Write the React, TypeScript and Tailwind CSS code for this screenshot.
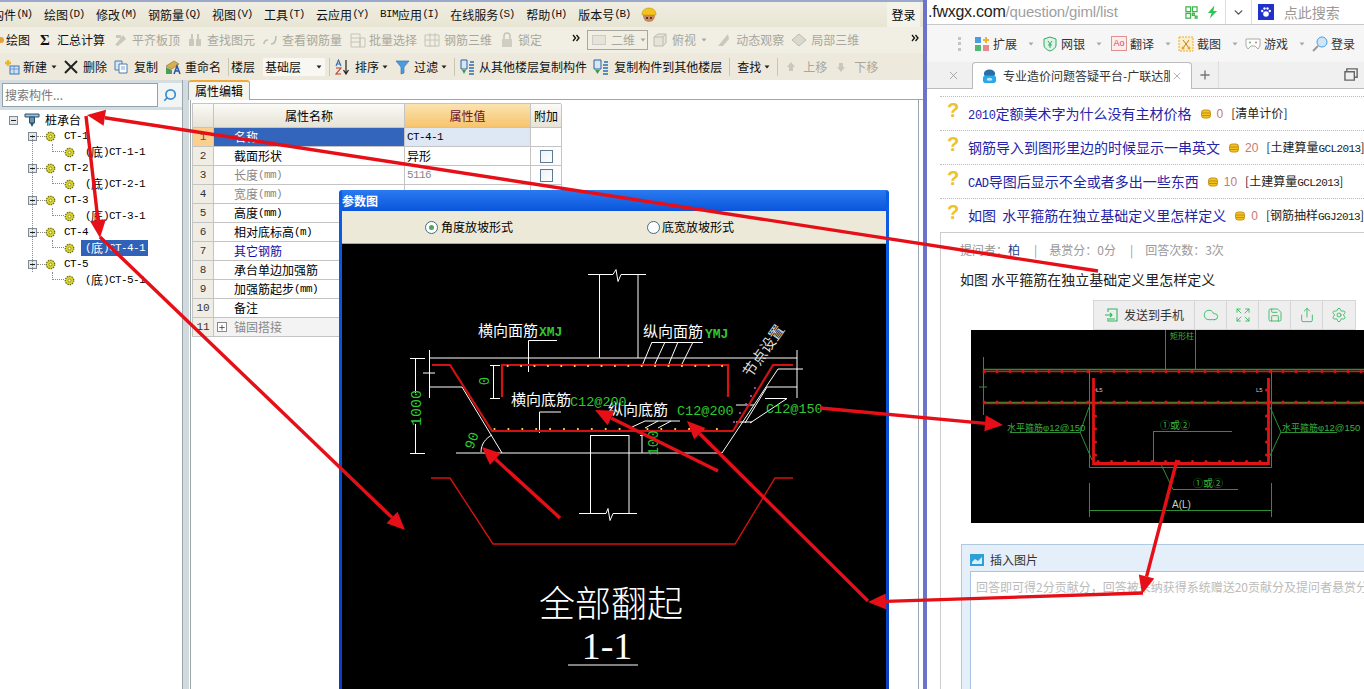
import React from "react";
import { Cloud, Expand, Save, Share, Settings, ChevronDown, Plus, X, Search } from "lucide-react";

const Drop = ({ className = "", gray = false }: { className?: string; gray?: boolean }) => (
  <svg viewBox="0 0 8 8" className={`w-[8px] h-[8px] shrink-0 ${className}`}>
    <path d="M1.5 2.5h5L4 5.5z" fill={gray ? "#a9a79c" : "#222"} />
  </svg>
);
const Sep = ({ className = "" }: { className?: string }) => <span className={`w-px h-[18px] bg-[#c9c6b6] shrink-0 ${className}`} />;
const Chev2 = ({ className = "" }: { className?: string }) => (
  <svg viewBox="0 0 8 8" className={`w-[8px] h-[8px] shrink-0 -mt-[5px] ${className}`} fill="none" stroke="#111" strokeWidth="1.3">
    <path d="M1 1l2.5 3L1 7M4.5 1L7 4 4.5 7" />
  </svg>
);

const Menu = ({ n, k, latin }: { n: string; k: string; latin?: string }) => (
  <span className="flex items-center shrink-0 text-[12px] text-[#111]">
    {latin && <span className="font-['Liberation_Mono',monospace] text-[11px] tracking-[-0.6px] w-[18px]">{latin}</span>}
    {n}
    <span className="w-[16px] font-['Liberation_Mono',monospace] text-[11px] tracking-[-1.4px] text-center whitespace-nowrap">({k})</span>
  </span>
);

const G = ({ w, children, className = "" }: { w: number; children: React.ReactNode; className?: string }) => (
  <svg viewBox={`0 0 ${w} 16`} width={w} height={16} className={`shrink-0 ${className}`}>{children}</svg>
);

const M = ({ children }: { children: React.ReactNode }) => (
  <span className="font-['Liberation_Mono',monospace] text-[11px] tracking-[-0.6px]">{children}</span>
);

const Gear = ({ className = "" }: { className?: string }) => (
  <svg viewBox="0 0 12 12" className={`w-[11px] h-[11px] shrink-0 ${className}`}>
    <circle cx="6" cy="6" r="4.6" fill="#d8d830" stroke="#6e6a10" strokeWidth="1.4" strokeDasharray="1.6 1" />
    <circle cx="6" cy="6" r="1.6" fill="#fffbb0" stroke="#6e6a10" strokeWidth=".7" />
  </svg>
);
const MinusBox = ({ className = "" }: { className?: string }) => (
  <span className={`w-[9px] h-[9px] border border-[#7f8a94] bg-[#e8e8e8] flex items-center justify-center shrink-0 ${className}`}>
    <span className="w-[5px] h-px bg-[#222]" />
  </span>
);

const treeData = [1, 2, 3, 4, 5];

const Tree = () => (
  <div className="relative pt-[2px]">
    <div className="h-[16px] flex items-center pl-[9px]">
      <MinusBox />
      <svg viewBox="0 0 16 16" className="w-[16px] h-[16px] ml-[6px] shrink-0">
        <path d="M1 2h14v3H1z" fill="#9ec0d8" stroke="#28516e" />
        <path d="M5.5 5h5v6h-5z" fill="#6b93ae" stroke="#28516e" />
        <path d="M6 11h4l-2 4z" fill="#28516e" />
      </svg>
      <span className="ml-[5px] text-[12px] text-black">桩承台</span>
    </div>
    {treeData.map((i) => (
      <div key={i}>
        <div className="h-[16px] flex items-center pl-[28px]">
          <MinusBox />
          <span className="w-[8px] border-t border-dotted border-[#888]" />
          <Gear />
          <span className="ml-[8px] flex items-center"><M>{`CT-${i}`}</M></span>
        </div>
        <div className="h-[16px] flex items-center pl-[52px]">
          <span className="w-[12px] h-[8px] -mt-[8px] border-l border-b border-dotted border-[#888]" />
          <Gear />
          {i === 4 ? (
            <span className="ml-[6px] h-[16px] w-[67px] pl-[4px] flex items-center bg-[#2f62b8] text-white text-[12px] whitespace-pre"><M>(</M>底<M>)CT-4-1</M></span>
          ) : (
            <span className="ml-[10px] flex items-center text-[12px] text-black whitespace-pre"><M>(</M>底<M>){`CT-${i}-1`}</M></span>
          )}
        </div>
      </div>
    ))}
    <div className="absolute left-[32px] top-[25px] h-[137px] border-l border-dotted border-[#888]" />
  </div>
);

const rows: [string, string, string, string, string][] = [
  ["名称", "", "CT-4-1", "", "sel"],
  ["截面形状", "", "异形", "box", ""],
  ["长度", "(mm)", "5116", "box", "gray"],
  ["宽度", "(mm)", "", "", "gray"],
  ["高度", "(mm)", "", "", ""],
  ["相对底标高", "(m)", "", "", ""],
  ["其它钢筋", "", "", "", "blue"],
  ["承台单边加强筋", "", "", "", ""],
  ["加强筋起步", "(mm)", "", "", ""],
  ["备注", "", "", "", ""],
  ["锚固搭接", "", "", "", "plus"],
];

const PropTable = () => (
  <div className="grid grid-cols-[21px_191px_126px_31px] grid-rows-[24px] auto-rows-[19px] w-[369px] border-l border-t border-[#c4c4c4] text-[12px]">
    <div className="bg-gradient-to-b from-[#fbfaf6] to-[#e6e3d6] border-b border-r border-[#c4c4c4]" />
    <div className="bg-gradient-to-b from-[#fbfaf6] to-[#e6e3d6] border-b border-r border-[#c4c4c4] flex items-center justify-center text-black">属性名称</div>
    <div className="bg-gradient-to-b from-[#fbe3b0] to-[#f7c46c] border-b border-r border-[#c4c4c4] flex items-center justify-center text-[#6b1030]">属性值</div>
    <div className="bg-gradient-to-b from-[#fbfaf6] to-[#e6e3d6] border-b border-r border-[#c4c4c4] flex items-center justify-center text-black">附加</div>
    {rows.map((r, i) => (
      <React.Fragment key={i}>
        <div className={`border-b border-r border-[#c4c4c4] flex items-center justify-center font-['Liberation_Mono',monospace] text-[11px] ${r[4] === "sel" ? "bg-[#fbd08e] text-[#555]" : "bg-[#f0eee4] text-[#333]"}`}>{i + 1}</div>
        <div className={`border-b border-r border-[#c4c4c4] flex items-center whitespace-pre ${r[4] === "sel" ? "bg-[#3265bb] text-white pl-[20px]" : r[4] === "plus" ? "bg-[#f3f3f3] text-[#888] pl-[3px]" : r[4] === "gray" ? "text-[#888] pl-[20px]" : r[4] === "blue" ? "text-[#1111aa] pl-[20px]" : "text-black pl-[20px]"}`}>
          {r[4] === "plus" && (
            <span className="w-[10px] h-[10px] border border-[#888] bg-white flex items-center justify-center mr-[7px]"><Plus size={9} color="#222" strokeWidth={2} /></span>
          )}
          {r[0]}
          {r[1] && <M>{r[1]}</M>}
        </div>
        <div className={`border-b border-r border-[#c4c4c4] flex items-center pl-[2px] ${r[4] === "sel" ? "bg-[#dee8f4]" : r[4] === "plus" ? "bg-[#f3f3f3]" : ""} ${r[4] === "gray" ? "text-[#888]" : "text-black"}`}>
          {r[4] === "gray" || r[4] === "sel" ? <M>{r[2]}</M> : r[2]}
        </div>
        <div className={`border-b border-r border-[#c4c4c4] flex items-center justify-center ${r[4] === "plus" ? "bg-[#f3f3f3]" : ""}`}>
          {r[3] === "box" && <span className="w-[13px] h-[13px] border border-[#5b7a93] bg-gradient-to-br from-[#eef0f2] to-white" />}
        </div>
      </React.Fragment>
    ))}
  </div>
);

const Cad = () => {
  const top = Array.from({ length: 17 }, (_, i) => 507.7 + i * 13.4);
  const bottom = Array.from({ length: 18 }, (_, i) => 494.5 + i * 13.9);
  return (
    <svg viewBox="342 244 544 445" className="w-[544px] h-[445px] block" fontFamily="'Noto Sans CJK SC', sans-serif">
      <g stroke="#fff" strokeWidth="1" fill="none">
        <path d="M588 274.5H613l3 -5 2 12 3-7H646M599.5 274V358M638 274V358" />
        <path d="M429 358H797M429.5 350V398M423 373H435M429 387H462L502 453M456 453H722L778 369H803M767 387H797M797 350V398" />
        <path d="M410 358.5H425M410 453.5H425M415.5 358V393M415.5 424V453" />
        <path d="M490 365.5H500M490 398.5H500M493.5 365V398" />
        <path d="M528.5 372V340.5H557M652 342.5H703M642 366L652 342M654 366L665 342M668 366L678 342M681 366L693 342" />
        <path d="M539.5 433V412H561M632 427L645 421H680M645 428L658 421M658 428L671 421" />
        <path d="M765 398.5H787L750 423M736 405H754M736 422H752M767 387L745 423" />
        <path d="M590.5 435V513M629 435V513M590 435.5H629M579 513.5H606l2 -5 2 12 3-7H637M642 435V453M640 435.5H647" />
        <path d="M481 452C481 444 486 438 492 435" />
        <path d="M568 665H638" />
      </g>
      <g fill="none" stroke="#d11212">
        <path d="M432 365H450L492 431H733L773 365H793" strokeWidth="2.2" />
        <path d="M502 397V365H728V397" strokeWidth="2.2" />
        <path d="M431 478H450L493 544H735L775 478H793" strokeWidth="1.4" />
      </g>
      {top.slice(0, 17).map((x) => <circle key={x} cx={x} cy={366} r="1.1" fill="#ffe14d" />)}
      {bottom.slice(0, 17).map((x) => <circle key={x} cx={x} cy={429} r="1.1" fill="#ffe14d" />)}
      {[[755, 388], [751, 396], [746, 404], [740, 413], [734, 422]].map(([x, y]) => <circle key={x} cx={x} cy={y} r="1.1" fill="#c050e0" />)}
      <g fill="#fff" fontSize="15">
        <text x="478" y="336">横向面筋</text>
        <text x="643" y="337">纵向面筋</text>
        <text x="511" y="405">横向底筋</text>
        <text x="608" y="415">纵向底筋</text>
        <text x="768" y="354" transform="rotate(-55 768 354)" fontSize="15" textAnchor="middle" fill="#ddd">节点设置</text>
        <text x="611" y="617" textAnchor="middle" fontSize="36" fontWeight="300">全部翻起</text>
        <text x="607" y="659" textAnchor="middle" fontSize="38" fontFamily="'Liberation Serif', serif">1-1</text>
      </g>
      <g fill="#2fc832" fontFamily="'Liberation Mono', monospace" fontSize="13">
        <text x="539" y="336" fontWeight="700">XMJ</text>
        <text x="705" y="338" fontWeight="700">YMJ</text>
        <text x="570" y="406" fontSize="13.5">C12@200</text>
        <text x="677" y="415" fontSize="13.5">C12@200</text>
        <text x="766" y="413" fontSize="13.5">C12@150</text>
        <text x="421" y="408" fontSize="15" textAnchor="middle" transform="rotate(-90 421 408)">1000</text>
        <text x="489" y="381" fontSize="14" textAnchor="middle" transform="rotate(-90 489 381)">0</text>
        <text x="658" y="443" fontSize="14" textAnchor="middle" transform="rotate(-90 658 443)">100</text>
        <text x="476" y="442" fontSize="14" textAnchor="middle" transform="rotate(-70 476 442)">90</text>
      </g>
    </svg>
  );
};

const Photo = () => {
  const ds = Array.from({ length: 30 }, (_, i) => 984 + i * 13);
  const us = Array.from({ length: 13 }, (_, i) => 1098 + i * 13.5);
  const vs = [390, 403, 416, 429, 442, 455];
  return (
    <svg viewBox="971 330 393 193" className="w-[393px] h-[193px] block bg-black" fontFamily="'Noto Sans CJK SC', sans-serif">
      <g stroke="#2f8f35" strokeWidth="1" fill="none">
        <path d="M1165.5 330V369M1195.5 330V369M983.5 357V415M979 387H987" />
        <path d="M983 369.5H1364M983 402.5H1364" strokeWidth="1.5" />
        <path d="M1089.5 370V467.5H1271.5V370" />
        <path d="M1010 432.5H1080L1089 407M1080 432L1092 460" />
        <path d="M1281 432.5H1337M1281 432L1270 407M1281 432L1268 460" />
        <path d="M1153 431.5H1232M1153.5 431V463M1160 462L1173 489.5H1238" />
        <path d="M1089 510.5H1271M1089.5 483V517M1271.5 483V517" />
      </g>
      <g stroke="#e01414" fill="none">
        <path d="M983 371.5H1364M983 403.5H1364" strokeWidth="1.6" />
        <path d="M1093.5 378V463.5H1268.5V378" strokeWidth="2.8" />
      </g>
      {ds.map((x) => <circle key={x} cx={x} cy={371.5} r="1.5" fill="#e01414" />)}
      {ds.map((x) => <circle key={x} cx={x} cy={402} r="1.5" fill="#e01414" />)}
      {us.map((x) => <circle key={x} cx={x} cy={461.5} r="1.5" fill="#e01414" />)}
      {vs.map((y) => <circle key={y} cx={1095.5} cy={y} r="1.5" fill="#e01414" />)}
      {vs.map((y) => <circle key={y} cx={1266.5} cy={y} r="1.5" fill="#e01414" />)}
      <g fill="#3ab03f" fontSize="10">
        <text x="1170" y="339" fontSize="8">矩形柱</text>
        <text x="1007" y="431" fontSize="9">水平箍筋<tspan fontSize="9.5" fontFamily="'Liberation Sans', sans-serif">φ12@150</tspan></text>
        <text x="1282" y="431" fontSize="9">水平箍筋<tspan fontSize="9.5" fontFamily="'Liberation Sans', sans-serif">φ12@150</tspan></text>
        <text x="1160" y="429" fontSize="10">①或②</text>
        <text x="1193" y="487" fontSize="10">①或②</text>
        <text x="1172" y="508" fontSize="10" fill="#bcd8bc" fontFamily="'Liberation Sans', sans-serif">A(L)</text>
        <text x="1096" y="392" fontSize="6" fill="#ccc" fontFamily="'Liberation Sans', sans-serif">L5</text>
        <text x="1256" y="392" fontSize="6" fill="#ccc" fontFamily="'Liberation Sans', sans-serif">L5</text>
      </g>
    </svg>
  );
};

type Arrow = [number, number, number, number];
const arrows: Arrow[] = [
  [1098, 271, 87, 115],
  [86, 116, 100, 238],
  [100, 237, 405, 530],
  [560, 518, 482, 447],
  [718, 471, 595, 410],
  [868, 601, 687, 421],
  [820, 408, 1003, 425],
  [1177, 460, 1142, 594],
  [1143, 593, 868, 602],
];

const Arrows = () => (
  <svg viewBox="0 0 1364 689" className="absolute inset-0 w-[1364px] h-[689px] pointer-events-none">
    {arrows.map(([a, b, c, d], i) => {
      const len = Math.hypot(c - a, d - b);
      const ux = (c - a) / len, uy = (d - b) / len;
      const bx = c - ux * 18, by = d - uy * 18;
      const pts = `${c},${d} ${bx - uy * 8},${by + ux * 8} ${bx + uy * 8},${by - ux * 8}`;
      return (
        <g key={i}>
          <line x1={a} y1={b} x2={bx} y2={by} stroke="#e60f17" strokeWidth="3.4" />
          <polygon points={pts} fill="#e60f17" />
        </g>
      );
    })}
  </svg>
);

const qs = [
  { p: "2010", t: "定额美术字为什么没有主材价格", c: "0", cat: "清单计价", latin: "" },
  { p: "", t: "钢筋导入到图形里边的时候显示一串英文", c: "20", cat: "土建算量", latin: "GCL2013" },
  { p: "CAD", t: "导图后显示不全或者多出一些东西", c: "10", cat: "土建算量", latin: "GCL2013" },
  { p: "", t: "如图  水平箍筋在独立基础定义里怎样定义", c: "0", cat: "钢筋抽样", latin: "GGJ2013" },
];

const Coin = () => (
  <svg viewBox="0 0 10 10" className="w-[10px] h-[10px] shrink-0">
    <rect x=".5" y="1" width="9" height="8" rx="2.5" fill="#f2c21f" stroke="#c8941a" />
    <path d="M1 4h8M1 6.5h8" stroke="#a87a12" strokeWidth=".7" />
  </svg>
);

const RT = ({ label, children, className = "" }: { label: string; children: React.ReactNode; className?: string }) => (
  <span className={`flex items-center shrink-0 ${className}`}>
    <span className="w-[16px] h-[16px] flex items-center justify-center">{children}</span>
    <span className="ml-[3px] text-[12px] text-[#333] w-[24px] whitespace-nowrap">{label}</span>
    <Drop gray className="ml-[10px]" />
  </span>
);

export default function App() {
  return (
    <div className="relative w-[1364px] h-[689px] overflow-hidden flex bg-white font-['Noto_Sans_CJK_SC',sans-serif] text-[12px]">
      {/* Left application window */}
      <div className="w-[923px] h-full flex flex-col bg-[#ece9d8] shrink-0">
        <div className="h-[2px] bg-[#9aa8cc]" />
        <div className="h-[25px] flex items-center gap-[12px] -ml-[8px] bg-gradient-to-b from-[#f0eee2] to-[#e8e5d4] overflow-hidden">
          <Menu n="构件" k="N" />
          <Menu n="绘图" k="D" />
          <Menu n="修改" k="M" />
          <Menu n="钢筋量" k="Q" />
          <Menu n="视图" k="V" />
          <Menu n="工具" k="T" />
          <Menu n="云应用" k="Y" />
          <Menu n="应用" k="I" latin="BIM" />
          <Menu n="在线服务" k="S" />
          <Menu n="帮助" k="H" />
          <Menu n="版本号" k="B" />
          <svg viewBox="0 0 16 16" className="w-[16px] h-[16px] -ml-[1px] shrink-0">
            <circle cx="8" cy="9" r="6" fill="#c98a5a" />
            <path d="M1 8C1 3 4 1 8 1s7 2 7 7z" fill="#f4c21c" stroke="#b88a10" strokeWidth=".5" />
            <circle cx="6" cy="11" r="1" fill="#222" /><circle cx="10" cy="11" r="1" fill="#222" />
          </svg>
          <span className="ml-auto mr-[3px] w-[33px] h-[25px] bg-[#f4f3ea] flex items-center justify-center text-[12px] text-black">登录</span>
        </div>
        <div className="h-[26px] flex items-center bg-[#f1efe3] text-[#111] overflow-hidden">
          <span className="w-[4px] h-[6px] bg-[#e5a23a] rounded-r-full shrink-0" />
          <span className="ml-[2px] w-[24px] shrink-0">绘图</span>
          <span className="ml-[10px] w-[10px] font-['Liberation_Serif',serif] font-bold text-[15px] leading-none shrink-0">Σ</span>
          <span className="ml-[7px] shrink-0">汇总计算</span>
          <G w={14} className="ml-[8px]"><path d="M2 13L10 3l3 4-8 7zM3 3h5v3H3z" fill="#c9c8bc" /></G>
          <span className="ml-[5px] text-[#a9a79c] shrink-0">平齐板顶</span>
          <G w={16} className="ml-[7px]"><path d="M2 7h5v7H2zM9 7h5v7H9zM4 2h2v5H4zM10 2h2v5h-2z" fill="#c9c8bc" /></G>
          <span className="ml-[4px] text-[#a9a79c] shrink-0">查找图元</span>
          <G w={14} className="ml-[8px]"><path d="M1 12c0-3 2-4 4-4M8 12c3 0 5-3 5-8" fill="none" stroke="#bfbeb2" strokeWidth="1.6" /></G>
          <span className="ml-[5px] text-[#a9a79c] shrink-0">查看钢筋量</span>
          <G w={16} className="ml-[8px]"><path d="M1 2h9v13H1zM10 6h5v9h-5zM1 6h9M1 10h9" fill="none" stroke="#c4c3b6" /></G>
          <span className="ml-[3px] text-[#a9a79c] shrink-0">批量选择</span>
          <G w={16} className="ml-[7px]"><path d="M1 3h14v11H1zM6 1v14M11 1v14M1 8h14" fill="none" stroke="#c4c3b6" /></G>
          <span className="ml-[4px] text-[#a9a79c] shrink-0">钢筋三维</span>
          <G w={14} className="ml-[8px]"><path d="M2 7h10v8H2z" fill="#cfcec2" /><path d="M4 7V4a3 3 0 016 0v3" fill="none" stroke="#c4c3b6" strokeWidth="1.5" /></G>
          <span className="ml-[4px] text-[#a9a79c] shrink-0">锁定</span>
          <Chev2 className="ml-[30px]" />
          <span className="ml-[7px] w-[61px] h-[20px] border border-[#a9a79c] flex items-center pl-[4px] text-[#a9a79c] shrink-0">
            <span className="w-[14px] h-[10px] bg-[#e6e4d8] border border-[#ccc] mr-[5px]" />二维<Drop gray className="ml-[4px]" />
          </span>
          <G w={14} className="ml-[5px]"><path d="M1 5l4-3h8v9l-3 3H1zM1 5h9v9M10 5l3-3" fill="#e6e4d8" stroke="#bdbcb0" /></G>
          <span className="ml-[5px] text-[#a9a79c] shrink-0">俯视</span>
          <Drop gray className="ml-[4px]" />
          <G w={16} className="ml-[7px]"><path d="M3 14L13 2l1 5-6 7z" fill="#c9c8bc" /></G>
          <span className="ml-[5px] text-[#a9a79c] shrink-0">动态观察</span>
          <G w={16} className="ml-[7px]"><path d="M1 8l7-6 7 6-7 6z" fill="#dad9cd" stroke="#bdbcb0" /></G>
          <span className="ml-[4px] text-[#a9a79c] shrink-0">局部三维</span>
          <Chev2 className="ml-[52px]" />
        </div>
        <div className="h-[27px] flex items-center bg-[#ede9dc] text-[#111] overflow-hidden pl-[4px]">
          <G w={16}><rect x="6" y="7" width="9" height="8" fill="#cfe0f0" stroke="#3a79b8" /><path d="M6 10h9M10 7v8" stroke="#3a79b8" strokeWidth=".6" /><path d="M1 4h6M4 1v6" stroke="#e8b82c" strokeWidth="2.4" /></G>
          <span className="ml-[3px] shrink-0">新建</span>
          <Drop className="ml-[3px]" />
          <svg viewBox="0 0 14 14" className="w-[14px] h-[14px] ml-[6px] shrink-0"><path d="M1 1l12 12M13 1L1 13" stroke="#222" strokeWidth="2" /></svg>
          <span className="ml-[5px] shrink-0">删除</span>
          <G w={14} className="ml-[7px]"><path d="M1 2h7v9H1z" fill="#d8e6f4" stroke="#4a7bb0" /><path d="M5 5h8v9H5z" fill="#fff" stroke="#4a7bb0" /><path d="M7 8h4M7 10h4" stroke="#4a7bb0" strokeWidth=".7" /></G>
          <span className="ml-[6px] shrink-0">复制</span>
          <G w={16} className="ml-[7px]"><path d="M1 7L9 2l5 3-7 5z" fill="#d9b04a" stroke="#8c6d1e" strokeWidth=".6" /><path d="M1 15V8l6 3v4z" fill="#4d9a5a" /><path d="M9 15l3-8 3 8M10 12h4" fill="none" stroke="#2a56a8" strokeWidth="1.5" /></G>
          <span className="ml-[4px] shrink-0">重命名</span>
          <Sep className="ml-[7px]" />
          <span className="ml-[2px] shrink-0">楼层</span>
          <span className="ml-[8px] w-[62px] h-[18px] bg-[#f8f7f1] flex items-center pl-[2px] shrink-0">基础层<Drop className="ml-auto mr-[2px]" /></span>
          <Sep className="ml-[4px]" />
          <G w={16} className="ml-[5px]"><path d="M1 7l2.5-6L6 7M1.8 5h3.4" fill="none" stroke="#2a6cc0" strokeWidth="1.1" /><path d="M1 9h5L1 15h5" fill="none" stroke="#c0392b" strokeWidth="1.1" /><path d="M11 1v13M8.5 11l2.5 4 2.5-4" fill="none" stroke="#222" strokeWidth="1.2" /></G>
          <span className="ml-[4px] shrink-0">排序</span>
          <Drop className="ml-[2px]" />
          <G w={15} className="ml-[6px]"><path d="M1 2h13L9 8v6l-3 1V8z" fill="#4c9de0" stroke="#2a6cb0" strokeWidth=".6" /></G>
          <span className="ml-[4px] shrink-0">过滤</span>
          <Drop className="ml-[2px]" />
          <Sep className="ml-[6px]" />
          <G w={15} className="ml-[5px]"><path d="M1 1h6v9H1z" fill="#d8e6f4" stroke="#2d5f9e" /><path d="M2 11h4l-2 4z" fill="#3a9a4a" /><path d="M9 6h5M9 9h5M9 12h5M9 15h5M10 3h4" stroke="#2d6fb8" strokeWidth="1.6" /></G>
          <span className="ml-[4px] shrink-0">从其他楼层复制构件</span>
          <G w={16} className="ml-[6px]"><path d="M1 1h7v9H1z" fill="#d8e6f4" stroke="#2d5f9e" /><path d="M2 11h5l-2.5 4z" fill="#3a9a4a" /><path d="M10 6h5M10 9h5M10 12h5M10 15h5M11 3h4" stroke="#2d6fb8" strokeWidth="1.6" /></G>
          <span className="ml-[5px] shrink-0">复制构件到其他楼层</span>
          <Sep className="ml-[7px]" />
          <span className="ml-[7px] shrink-0">查找</span>
          <Drop className="ml-[2px]" />
          <Sep className="ml-[6px]" />
          <G w={10} className="ml-[8px]"><path d="M5 3l4 5H7v4H3V8H1z" fill="#c9c8bc" /></G>
          <span className="ml-[7px] text-[#a9a79c] shrink-0">上移</span>
          <G w={10} className="ml-[9px]"><path d="M5 13l4-5H7V4H3v4H1z" fill="#c9c8bc" /></G>
          <span className="ml-[8px] text-[#a9a79c] shrink-0">下移</span>
        </div>
        <div className="flex-1 flex min-h-0">
          <div className="w-[183px] bg-white flex flex-col border-r border-[#9aa7ad] shrink-0">
            <div className="h-[30px] bg-[#d6dde0] flex items-center pl-[2px]">
              <div className="w-[156px] h-[24px] border border-[#8fa3ad] bg-white flex items-center pl-[2px] text-[#777] text-[12px]">搜索构件...</div>
              <div className="flex-1 h-[24px] bg-[#f2f5f6] flex items-center justify-center">
                <Search size={14} strokeWidth={3} color="#3f8fcf" className="-scale-x-100" />
              </div>
            </div>
            <Tree />
          </div>
          <div className="w-[6px] bg-[#d3dade] shrink-0" />
          <div className="flex-1 flex flex-col bg-white min-w-0">
            <div className="h-[20px] flex items-end">
              <div className="ml-[-1px] w-[62px] h-[20px] border border-b-0 border-[#9aa7ad] border-t-2 border-t-[#f0a93a] rounded-t-[3px] bg-[#f4f4ee] flex items-center justify-center text-[12px] text-black">属性编辑</div>
              <div className="flex-1 border-b border-[#9aa7ad]" />
            </div>
            <div className="flex-1 mr-[4px] ml-[1px] pl-[1px] pt-[3px] border-r border-l border-[#9aa7ad] bg-white">
              <PropTable />
            </div>
          </div>
        </div>
      </div>
      <div className="w-[4px] h-full bg-[#6b74c9] shrink-0" />

      {/* Right browser */}
      <div className="flex-1 min-w-0 h-full flex flex-col bg-white overflow-hidden">
        <div className="h-[25px] flex items-center border-b border-[#c8c8c8] shrink-0 font-['Liberation_Sans',sans-serif] text-[16px]">
          <span className="text-[#222] ml-[1px] tracking-[-0.25px]">.fwxgx.com</span><span className="text-[#a0a0a0] text-[15px] tracking-[-0.15px]">/question/giml/list</span>
          <svg viewBox="0 0 14 14" className="w-[13px] h-[13px] ml-[67px] shrink-0">
            <path d="M1 1h5v5H1zM8 1h5v5H8zM1 8h5v5H1zM8 8h2v2H8zM11 11h2v2h-2z" fill="none" stroke="#3bb54a" strokeWidth="1.3" />
          </svg>
          <svg viewBox="0 0 12 14" className="w-[11px] h-[14px] ml-[9px] shrink-0"><path d="M8 0L1 8h4l-2 6 8-8H7z" fill="#30c452" /></svg>
          <span className="w-px h-[24px] bg-[#ddd] ml-[7px]" />
          <ChevronDown size={13} strokeWidth={2.6} color="#555" className="ml-[6px]" />
          <span className="w-px h-[24px] bg-[#ddd] ml-[6px]" />
          <span className="ml-[6px] w-[16px] h-[16px] bg-[#2030c8] border border-[#2030c8] flex items-center justify-center shrink-0">
            <svg viewBox="0 0 12 12" className="w-[12px] h-[12px]"><circle cx="6" cy="8" r="2.8" fill="#fff" /><circle cx="2.2" cy="5" r="1.2" fill="#fff" /><circle cx="9.8" cy="5" r="1.2" fill="#fff" /><circle cx="4.5" cy="2.5" r="1.2" fill="#fff" /><circle cx="7.5" cy="2.5" r="1.2" fill="#fff" /></svg>
          </span>
          <span className="ml-[10px] text-[14px] text-[#999] font-['Noto_Sans_CJK_SC',sans-serif] whitespace-nowrap">点此搜索</span>
        </div>
        <div className="h-[37px] flex items-center bg-[#f6f6f6] shrink-0 pl-[31px]">
          <span className="w-[3px] h-[14px] border-l-[3px] border-dotted border-[#c4c4c4]" />
          <RT label="扩展" className="ml-[13px]">
            <svg viewBox="0 0 16 16" className="w-[16px] h-[16px]"><path d="M1 1h6v6H1z" fill="#4a9de0" /><path d="M9 9h6v6H9z" fill="#e88a8a" /><path d="M1 9h6v6H1z" fill="#50b870" /><path d="M12 1v6M9 4h6" stroke="#f0b030" strokeWidth="2" /></svg>
          </RT>
          <RT label="网银" className="ml-[7px]">
            <svg viewBox="0 0 14 16" className="w-[14px] h-[16px]"><path d="M7 1l6 2v6c0 3-3 5-6 6-3-1-6-3-6-6V3z" fill="#dff4e6" stroke="#33aa66" /><path d="M5 5l2 3 2-3M7 8v4M5 9h4" stroke="#33aa66" fill="none" /></svg>
          </RT>
          <RT label="翻译" className="ml-[8px]">
            <span className="w-[16px] h-[15px] border border-[#e09090] bg-[#fdecec] text-[#d05050] text-[9px] flex items-center justify-center font-['Liberation_Sans',sans-serif]">Ao</span>
          </RT>
          <RT label="截图" className="ml-[6px]">
            <svg viewBox="0 0 16 16" className="w-[16px] h-[16px]"><path d="M1 1h14v14H1z" fill="#fbeec8" stroke="#e8b030" strokeDasharray="2 1" /><path d="M5 4l6 8M11 4l-6 8" stroke="#c08020" /><circle cx="5" cy="12" r="1.5" fill="#e8a030" /><circle cx="11" cy="12" r="1.5" fill="#e8a030" /></svg>
          </RT>
          <RT label="游戏" className="ml-[6px]">
            <svg viewBox="0 0 16 16" className="w-[16px] h-[16px]"><path d="M1 3h14v7l-2 3-3-3H6l-3 3-2-3z" fill="#fff" stroke="#aaa" /><circle cx="5" cy="6.5" r="1" fill="#5bb35b" /><circle cx="11" cy="6.5" r="1" fill="#e07070" /></svg>
          </RT>
          <span className="ml-[6px] flex items-center shrink-0">
            <svg viewBox="0 0 16 16" className="w-[16px] h-[16px]"><circle cx="10" cy="6" r="5" fill="#cfe6f8" stroke="#4a9de0" /><path d="M6 10l-5 5" stroke="#999" strokeWidth="2" /></svg>
            <span className="ml-[3px] text-[#333] whitespace-nowrap">登录</span>
          </span>
        </div>
        <div className="h-[27px] flex items-end bg-[#f0f0f0] border-b border-[#bbb] shrink-0 relative">
          <X size={13} color="#999" strokeWidth={1.5} className="ml-[20px] mb-[6px]" />
          <div className="ml-[12px] w-[220px] h-[27px] -mb-px bg-white border border-b-0 border-[#bbb] rounded-t-[4px] flex items-center pl-[9px]">
            <svg viewBox="0 0 16 16" className="w-[15px] h-[15px] shrink-0"><ellipse cx="8" cy="5" rx="6" ry="4.5" fill="#2a6ca8" /><rect x="1" y="7" width="14" height="8" rx="3" fill="#2aa8e8" /><ellipse cx="8" cy="11" rx="3" ry="1.6" fill="#fff" opacity=".7" /></svg>
            <span className="ml-[6px] w-[167px] overflow-hidden whitespace-nowrap text-[12px] text-[#333]">专业造价问题答疑平台-广联达服务新干线</span>
            <X size={12} color="#999" strokeWidth={1.5} className="ml-[1px] shrink-0" />
          </div>
          <Plus size={14} strokeWidth={2.4} color="#777" className="ml-[6px] mb-[6px]" />
          <span className="ml-[6px] w-px h-[27px] bg-[#ddd]" />
          <svg viewBox="0 0 16 16" className="w-[15px] h-[15px] ml-[125px] mb-[6px] shrink-0" fill="none" stroke="#666" strokeWidth="1.5"><path d="M3 5V2h11v9h-3" /><path d="M1 5h10v9H1z" /></svg>
        </div>
        <div className="flex-1 min-h-0 bg-white pt-[7px]">
          <div className="ml-[13px]">
            {qs.map((q) => (
              <div key={q.t} className="h-[34px] flex items-center border-t border-dotted border-[#bbb] pl-[7px] whitespace-nowrap">
                <span className="w-[12px] -mt-[7px] font-['Liberation_Sans',sans-serif] font-bold text-[20px] leading-none text-[#eec22a] shrink-0">?</span>
                <span className="ml-[9px] text-[14px] text-[#2424a8] whitespace-pre">
                  {q.p && <span className="font-['Liberation_Mono',monospace] text-[12px] tracking-[-0.3px]">{q.p}</span>}
                  {q.t}
                </span>
                <span className="ml-[9px]"><Coin /></span>
                <span className="ml-[6px] text-[12px] text-[#c87870] font-['Liberation_Sans',sans-serif]">{q.c}</span>
                <span className="ml-[8px] text-[12px] text-[#222]">[{q.cat}<M>{q.latin}</M>]</span>
              </div>
            ))}
          </div>
          <div className="ml-[13px] h-[460px] border-l border-t border-[#ccc] pl-[19px]">
            <div className="h-[34px] flex items-center text-[12px] text-[#999] whitespace-nowrap">
              <span>提问者：</span><span className="text-[#2a3a8a]">柏</span>
              <span className="ml-[14px]">|</span><span className="ml-[12px]">悬赏分：0分</span>
              <span className="ml-[14px]">|</span><span className="ml-[12px]">回答次数：3次</span>
            </div>
            <div className="h-[24px] flex items-center text-[14px] text-[#222] whitespace-nowrap">如图 水平箍筋在独立基础定义里怎样定义</div>
            <div className="mt-[9px] ml-[133px] w-[263px] h-[30px] flex bg-[#eeeeee] border border-[#d6d6d6]">
              <div className="w-[101px] flex items-center pl-[11px] border-r border-[#d6d6d6]">
                <svg viewBox="0 0 14 14" className="w-[14px] h-[14px] shrink-0" fill="none" stroke="#2eb85c" strokeWidth="1.1"><path d="M3 4V1h9v12H3v-3M0 7h7M5 5l2 2-2 2M4 11h6" /></svg>
                <span className="ml-[5px] text-[12px] text-[#333]">发送到手机</span>
              </div>
              {[Cloud, Expand, Save, Share, Settings].map((I, i) => (
                <div key={i} className={`w-[32px] flex items-center justify-center ${i < 4 ? "border-r border-[#d6d6d6]" : ""}`}>
                  <I size={16} strokeWidth={1.3} color="#2eb85c" />
                </div>
              ))}
            </div>
            <div className="ml-[11px]"><Photo /></div>
            <div className="mt-[21px] ml-[1px] w-[500px] h-[160px] border-l border-t border-[#b0c8e0] bg-[#e4effa] pl-[8px]">
              <div className="h-[26px] flex items-center pt-[3px]">
                <svg viewBox="0 0 14 12" className="w-[14px] h-[12px] shrink-0"><rect width="14" height="12" fill="#2f9fd8" /><path d="M2 8l3-3 3 2 4-4v7H2z" fill="#d8f0ff" /></svg>
                <span className="ml-[6px] text-[12px] text-[#333]">插入图片</span>
              </div>
              <div className="h-full bg-white border-l border-t border-[#a8c4e0] pl-[5px] pt-[6px] text-[12px] text-[#bbb] whitespace-nowrap">回答即可得2分贡献分，回答被采纳获得系统赠送20贡献分及提问者悬赏分</div>
            </div>
          </div>
        </div>
      </div>

      {/* Floating parameter dialog */}
      <div className="absolute left-[339px] top-[190px] w-[550px] h-[499px] bg-gradient-to-b from-[#0a5ee6] to-[#0a3fc4] rounded-t-[3px] px-[3px] flex flex-col">
        <div className="h-[21px] flex items-center text-[12px] font-bold text-white shrink-0 bg-gradient-to-b from-[#2a7af0] to-[#0a55dc]">参数图</div>
        <div className="h-[33px] bg-[#ece9d8] flex items-center shrink-0 text-[12px] text-black border-b border-[#aca899]">
          <span className="ml-[83px] w-[13px] h-[13px] rounded-full border border-[#4a6a7c] bg-white flex items-center justify-center shrink-0">
            <span className="w-[5px] h-[5px] rounded-full bg-[#4aa85a]" />
          </span>
          <span className="ml-[3px]">角度放坡形式</span>
          <span className="ml-[134px] w-[13px] h-[13px] rounded-full border border-[#4a6a7c] bg-white shrink-0" />
          <span className="ml-[2px]">底宽放坡形式</span>
        </div>
        <div className="flex-1 bg-black min-h-0"><Cad /></div>
      </div>

      <Arrows />
    </div>
  );
}
